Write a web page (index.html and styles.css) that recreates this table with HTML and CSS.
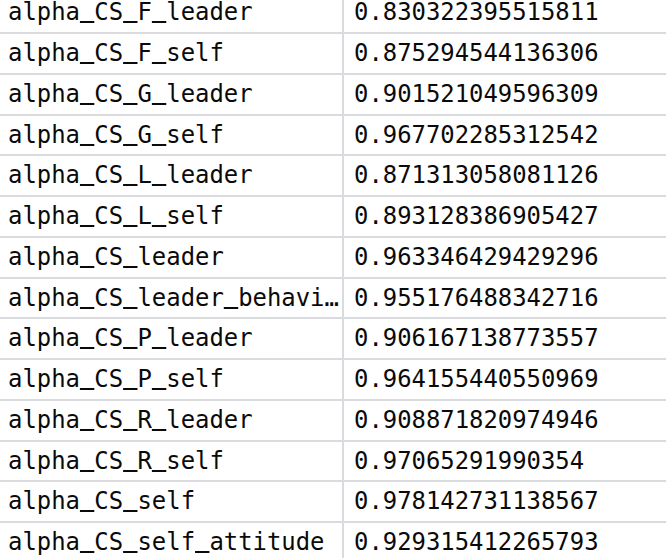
FILE: index.html
```html
<!DOCTYPE html>
<html>
<head>
    <meta charset="utf-8">
    <title>alpha values</title>
    <link rel="stylesheet" href="styles.css">
</head>
<body>
    <div class="sheet">
        <div class="cell key">alpha<span class="us">_</span>CS<span class="us">_</span>F<span class="us">_</span>leader</div><div class="cell val">0.830322395515811</div>
        <div class="cell key">alpha<span class="us">_</span>CS<span class="us">_</span>F<span class="us">_</span>self</div><div class="cell val">0.875294544136306</div>
        <div class="cell key">alpha<span class="us">_</span>CS<span class="us">_</span>G<span class="us">_</span>leader</div><div class="cell val">0.901521049596309</div>
        <div class="cell key">alpha<span class="us">_</span>CS<span class="us">_</span>G<span class="us">_</span>self</div><div class="cell val">0.967702285312542</div>
        <div class="cell key">alpha<span class="us">_</span>CS<span class="us">_</span>L<span class="us">_</span>leader</div><div class="cell val">0.871313058081126</div>
        <div class="cell key">alpha<span class="us">_</span>CS<span class="us">_</span>L<span class="us">_</span>self</div><div class="cell val">0.893128386905427</div>
        <div class="cell key">alpha<span class="us">_</span>CS<span class="us">_</span>leader</div><div class="cell val">0.963346429429296</div>
        <div class="cell key">alpha<span class="us">_</span>CS<span class="us">_</span>leader<span class="us">_</span>behaviour</div><div class="cell val">0.955176488342716</div>
        <div class="cell key">alpha<span class="us">_</span>CS<span class="us">_</span>P<span class="us">_</span>leader</div><div class="cell val">0.906167138773557</div>
        <div class="cell key">alpha<span class="us">_</span>CS<span class="us">_</span>P<span class="us">_</span>self</div><div class="cell val">0.964155440550969</div>
        <div class="cell key">alpha<span class="us">_</span>CS<span class="us">_</span>R<span class="us">_</span>leader</div><div class="cell val">0.908871820974946</div>
        <div class="cell key">alpha<span class="us">_</span>CS<span class="us">_</span>R<span class="us">_</span>self</div><div class="cell val">0.97065291990354</div>
        <div class="cell key">alpha<span class="us">_</span>CS<span class="us">_</span>self</div><div class="cell val">0.978142731138567</div>
        <div class="cell key">alpha<span class="us">_</span>CS<span class="us">_</span>self<span class="us">_</span>attitude</div><div class="cell val">0.929315412265793</div>
    </div>
</body>
</html>
```

FILE: styles.css
```css
* {
    margin: 0;
    padding: 0;
    box-sizing: border-box;
}
body {
    background: #fff;
    overflow: hidden;
    font-family: "DejaVu Sans Mono", "Liberation Mono", monospace;
    font-size: 23.9px;
    color: #0a0a0a;
}
.sheet {
    display: grid;
    grid-template-columns: 344px 1fr;
    margin-top: -6.75px; /* first row is cut off at the top */
}
.cell {
    height: 40.75px;
    line-height: 38px;
    border-bottom: 2px solid #d9dbde;
    white-space: nowrap;
    overflow: hidden;
    text-overflow: ellipsis;
    min-width: 0;
}
.key {
    padding-left: 8px;
    padding-right: 3px;
    border-right: 2px solid #d9dbde;
}
.val {
    padding-left: 10px;
}
/* the font's own underscore sits too low and thin, draw it as a rule under the baseline */
.us {
    color: transparent;
    text-decoration: underline;
    text-decoration-color: #0a0a0a;
    text-decoration-thickness: 2px;
    text-underline-offset: 1px;
    text-decoration-skip-ink: none;
}
```
